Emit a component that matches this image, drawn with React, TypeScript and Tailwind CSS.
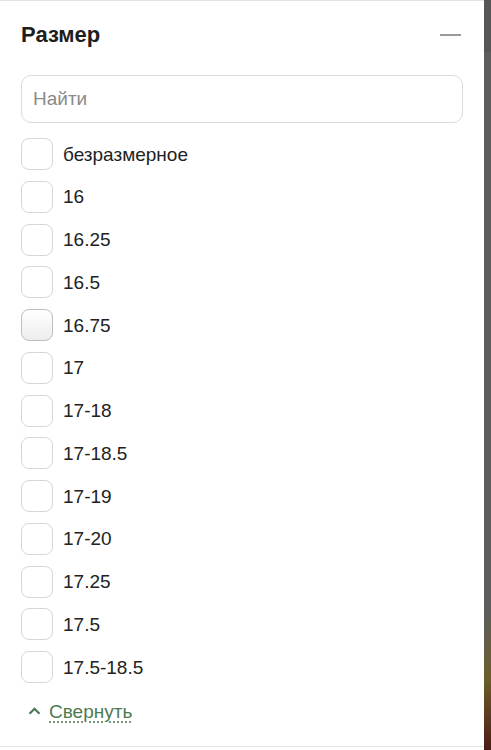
import React from "react";

const sizes = [
  "безразмерное",
  "16",
  "16.25",
  "16.5",
  "16.75",
  "17",
  "17-18",
  "17-18.5",
  "17-19",
  "17-20",
  "17.25",
  "17.5",
  "17.5-18.5",
];

function SizeRow({ label, hover }: { label: string; hover?: boolean }) {
  return (
    <label className="flex items-center gap-[10px] h-[32px] cursor-pointer">
      <span
        className={
          hover
            ? "w-[32px] h-[32px] rounded-[8px] border border-[#bdbdbd] bg-gradient-to-b from-white to-[#ededed] shrink-0"
            : "w-[32px] h-[32px] rounded-[8px] border border-[#d6d6d6] bg-white shrink-0"
        }
      />
      <span className="text-[19px] text-[#222] leading-none">{label}</span>
    </label>
  );
}

export default function App() {
  return (
    <div
      className="flex w-full h-[750px] bg-white"
      style={{ fontFamily: '"Liberation Sans", Arial, sans-serif' }}
    >
      <div className="w-[484px] h-[747px] flex flex-col border-t border-b border-[#e2e2e2] px-[21px] bg-white">
        <div className="h-[67px] flex items-center justify-between">
          <h2 className="text-[22px] font-bold text-[#1e1e1e] leading-none">Размер</h2>
          <span className="w-[21px] h-[2px] bg-[#9a9a9a] mr-[2px]" />
        </div>
        <input
          type="text"
          placeholder="Найти"
          className="mt-[7px] h-[48px] w-[442px] rounded-[10px] border border-[#dadada] px-[11px] text-[19px] text-[#222] placeholder:text-[#8a8a8a] outline-none"
        />
        <div className="mt-[15px] flex flex-col gap-[10.75px]">
          {sizes.map((s) => (
            <SizeRow key={s} label={s} hover={s === "16.75"} />
          ))}
        </div>
        <button className="mt-[16px] flex items-center gap-[8px] h-[24px] pl-[7px] self-start text-[#4d7a50]">
          <svg width="13" height="8" viewBox="0 0 13 8" fill="none">
            <path d="M1.5 6.8 L6.5 1.8 L11.5 6.8" stroke="#4d7a50" strokeWidth="2.2" />
          </svg>
          <span className="text-[19px] leading-none underline decoration-dotted decoration-[#6d946f] underline-offset-[4px]">
            Свернуть
          </span>
        </button>
      </div>
      <div className="flex-1 h-[750px] flex flex-col bg-[#5d5d5d]">
        <div className="h-[52px] bg-[#565656]" />
        <div className="h-[555px]" />
        <div className="flex-1 bg-gradient-to-b from-[#5d5d5d] via-[#6b5e2a] to-[#4a1c18]" />
      </div>
    </div>
  );
}
